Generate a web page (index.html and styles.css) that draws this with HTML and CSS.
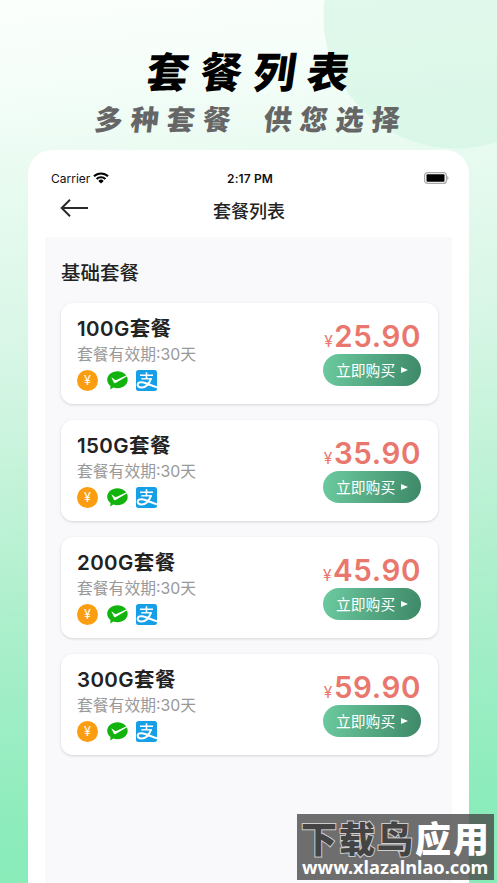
FILE: index.html
```html
<!DOCTYPE html>
<html lang="zh-CN">
<head>
    <meta charset="UTF-8">
    <meta name="viewport" content="width=device-width, initial-scale=1.0">
    <title>套餐列表</title>
    <link rel="stylesheet" href="styles.css">
</head>
<body>
    <header class="hero">
        <h1>套餐列表</h1>
        <p><span>多种套餐</span><span>供您选择</span></p>
    </header>

    <!-- shared payment icons -->
    <svg class="defs" width="0" height="0">
        <symbol id="wechat" viewBox="0 0 21 21">
            <path fill="#12b30c" d="M10.500 1.300C16.200 1.300 20.700 5.100 20.700 9.800S16.200 18.300 10.500 18.300c-1.500 0-2.900-.3-4.200-.8L3.300 19.500l.2-3.400C1.500 14.600.2 12.400.2 9.800.2 5.100 4.800 1.300 10.500 1.300z"/>
            <path fill="#fff" d="M4.300 7.300l4 2.700c.3.200.6.200 1 0L19.600 5.300l.5.900L8.600 13.100c-.8.4-1.400.2-1.800-.6z"/>
        </symbol>
        <symbol id="alipay" viewBox="0 0 21 21">
            <rect width="21" height="21" rx="2.500" fill="#159fe6"/>
            <g fill="none" stroke="#fff">
                <path stroke-width="1.600" d="M4 5.300h13M10.500 2.300v6.500"/>
                <path stroke-width="1.400" d="M5.300 8.800h10.500"/>
                <path stroke-width="2" d="M15 8.600c-1.800 5-5.300 8.900-9.400 8.900-2.300 0-3.900-1.100-3.900-2.900 0-1.700 1.800-2.600 4.100-2.400 4.600.4 8.800 3.300 15.200 5.200"/>
            </g>
        </symbol>
    </svg>

    <main class="phone">
        <div class="status">
            <div class="carrier">
                Carrier
                <svg width="16" height="12" viewBox="0 0 16 12" fill="none" stroke="#000" stroke-width="2.100">
                    <path d="M1 4.300a10 10 0 0 1 14 0M3.600 7a6.300 6.300 0 0 1 8.800 0"/>
                    <path fill="#000" stroke="none" d="M5.300 8.900a3.900 3.900 0 0 1 5.400 0L8 11.600z"/>
                </svg>
            </div>
            <time>2:17 PM</time>
            <svg class="battery" width="25" height="12" viewBox="0 0 25 12">
                <rect x=".6" y=".6" width="21.800" height="10.800" rx="3" fill="#fff" stroke="#aaa" stroke-width="1.200"/>
                <rect x="2.500" y="2.300" width="18" height="7.500" rx="1" fill="#000"/>
                <path fill="#aaa" d="M23.200 4c1.700.5 1.700 3.500 0 4z"/>
            </svg>
        </div>
        <nav class="nav">
            <svg width="28" height="20" viewBox="0 0 28 20" fill="none" stroke="#2b2b2b" stroke-width="2">
                <path d="M1.500 10H28M10 1.700L1.700 10l8.300 8.300"/>
            </svg>
            <h2>套餐列表</h2>
        </nav>
        <section class="content">
            <h3>基础套餐</h3>

            <article class="card">
                <div class="info">
                    <h4>100G套餐</h4>
                    <p>套餐有效期:30天</p>
                    <div class="pay">
                        <span class="coin">¥</span>
                        <svg><use href="#wechat"/></svg>
                        <svg><use href="#alipay"/></svg>
                    </div>
                </div>
                <div class="buy">
                    <div class="price"><small>¥</small>25.90</div>
                    <button type="button">立即购买<i></i></button>
                </div>
            </article>

            <article class="card">
                <div class="info">
                    <h4>150G套餐</h4>
                    <p>套餐有效期:30天</p>
                    <div class="pay">
                        <span class="coin">¥</span>
                        <svg><use href="#wechat"/></svg>
                        <svg><use href="#alipay"/></svg>
                    </div>
                </div>
                <div class="buy">
                    <div class="price"><small>¥</small>35.90</div>
                    <button type="button">立即购买<i></i></button>
                </div>
            </article>

            <article class="card">
                <div class="info">
                    <h4>200G套餐</h4>
                    <p>套餐有效期:30天</p>
                    <div class="pay">
                        <span class="coin">¥</span>
                        <svg><use href="#wechat"/></svg>
                        <svg><use href="#alipay"/></svg>
                    </div>
                </div>
                <div class="buy">
                    <div class="price"><small>¥</small>45.90</div>
                    <button type="button">立即购买<i></i></button>
                </div>
            </article>

            <article class="card">
                <div class="info">
                    <h4>300G套餐</h4>
                    <p>套餐有效期:30天</p>
                    <div class="pay">
                        <span class="coin">¥</span>
                        <svg><use href="#wechat"/></svg>
                        <svg><use href="#alipay"/></svg>
                    </div>
                </div>
                <div class="buy">
                    <div class="price"><small>¥</small>59.90</div>
                    <button type="button">立即购买<i></i></button>
                </div>
            </article>
        </section>
    </main>

    <div class="watermark">
        <div class="mark-name"><span>下载鸟</span>应用</div>
        <div class="mark-url">www.xlazalnlao.com</div>
    </div>
</body>
</html>
```
FILE: styles.css
```css
* {
    box-sizing: border-box;
    margin: 0;
    padding: 0;
}
body {
    position: relative;
    height: 883px;
    overflow: hidden;
    font-family: Inter, "Noto Sans CJK SC", sans-serif;
    color: #222;
    background:
        radial-gradient(circle at 456px 16px, rgba(205, 244, 223, .55) 132px, transparent 133px),
        linear-gradient(175deg, #fbfffc 0%, #f6fefa 8%, #e9fbf1 19%, #d8f6e6 38%, #c5f3da 51%, #a5eec8 72%, #8aecba 92%, #88ecb9 100%);
}
.defs {
    position: absolute;
}

/* heading */
.hero {
    height: 150px;
    padding-top: 45px;
    font-family: "Noto Sans CJK SC", sans-serif;
    white-space: nowrap;
}
.hero h1 {
    width: 370px;
    height: 53px;
    padding-left: 147px;
    font-size: 42px;
    font-weight: 900;
    line-height: 49px;
    letter-spacing: 11.500px;
    color: #000;
    transform: skewX(-8deg);
}
.hero p {
    display: flex;
    gap: 25px;
    width: 420px;
    padding-left: 95px;
    font-size: 28px;
    font-weight: 900;
    line-height: 40px;
    letter-spacing: 8px;
    color: #666;
    transform: skewX(-6deg);
}

/* phone */
.phone {
    width: 441px;
    height: 733px;
    margin-left: 28px;
    padding: 17px 17px 0;
    border-radius: 24px 24px 0 0;
    background: #fff;
}
.status {
    display: grid;
    grid-template-columns: 1fr auto 1fr;
    align-items: center;
    height: 22px;
    padding: 0 3px 0 6px;
    font-size: 12px;
    color: #111;
}
.carrier {
    display: flex;
    align-items: center;
    gap: 3px;
    font-size: 12px;
}
.status time {
    font-weight: 600;
    letter-spacing: .1px;
}
.battery {
    justify-self: end;
}
.nav {
    position: relative;
    height: 48px;
}
.nav svg {
    position: absolute;
    left: 15px;
    top: 9px;
}
.nav h2 {
    padding-top: 10px;
    padding-left: 1px;
    font-size: 18px;
    font-weight: 500;
    line-height: 26px;
    text-align: center;
}
.content {
    height: 646px;
    padding: 20px 14px 0 16px;
    background: #f9f9fc;
}
.content h3 {
    height: 46px;
    font-size: 19.5px;
    font-weight: 500;
    line-height: 32px;
}
.card {
    display: flex;
    justify-content: space-between;
    height: 101px;
    margin-bottom: 16px;
    padding: 12px 17px 0 16px;
    border-radius: 12px;
    background: #fff;
    box-shadow: 0 1px 3px rgba(0, 0, 0, .15);
}
.info h4 {
    font-size: 20.500px;
    font-weight: 600;
    line-height: 28px;
    letter-spacing: .4px;
}
.info p {
    font-size: 15.800px;
    line-height: 23px;
    color: #999;
}
.pay {
    display: flex;
    gap: 8.500px;
    margin-top: 4px;
}
.pay svg {
    width: 21px;
    height: 21px;
}
.coin {
    width: 21px;
    height: 21px;
    border-radius: 50%;
    font-size: 12.5px;
    line-height: 21px;
    text-align: center;
    color: #fff;
    background: #fa9d10;
}
.buy {
    display: flex;
    flex-direction: column;
    align-items: flex-end;
}
.price {
    height: 39px;
    font-size: 29.5px;
    font-weight: 600;
    line-height: 42px;
    letter-spacing: .6px;
    color: #e9776e;
}
.price small {
    margin-right: 1px;
    font-size: 15.500px;
    font-weight: 400;
}
.buy button {
    display: flex;
    align-items: center;
    width: 98px;
    height: 32px;
    padding: 0 0 1px 13px;
    border: none;
    border-radius: 16px;
    font-family: "Noto Sans CJK SC", sans-serif;
    font-size: 14.800px;
    color: #fff;
    background: linear-gradient(100deg, #6ccba0, #3d8867);
}
.buy button i {
    margin-left: 6px;
    border: 3.5px solid transparent;
    border-left: 7px solid #fff;
    border-right: 0;
}

/* site mark */
.watermark {
    position: absolute;
    left: 297px;
    top: 814px;
    width: 197px;
    height: 66px;
    padding-top: 4px;
    background: rgba(70, 70, 70, .78);
    color: #fff;
    white-space: nowrap;
}
.mark-name {
    height: 39px;
    padding-left: 4px;
    font-family: "Noto Sans CJK SC", sans-serif;
    font-size: 36px;
    font-weight: 900;
    line-height: 38px;
    letter-spacing: 2px;
}
.mark-name span {
    color: #444;
    -webkit-text-stroke: 2px #ccc;
    paint-order: stroke fill;
}
.mark-url {
    padding-left: 5px;
    font-family: "Noto Sans", sans-serif;
    font-size: 18.2px;
    font-weight: 700;
    line-height: 21px;
}
```
